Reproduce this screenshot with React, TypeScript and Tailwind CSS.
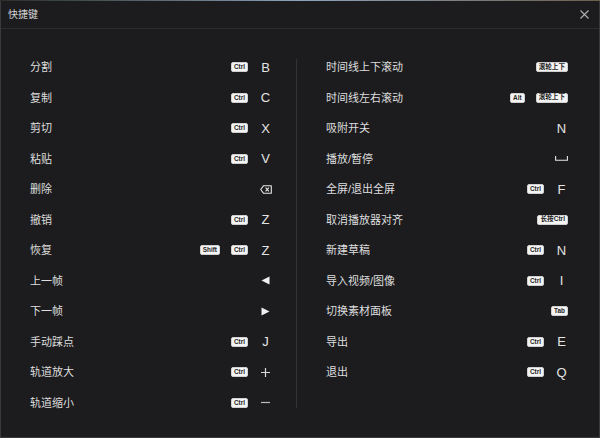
import React from 'react';

type Key =
  | { kind: 'badge'; text: string; cjk?: boolean }
  | { kind: 'char'; text: string }
  | { kind: 'icon'; name: 'backspace' | 'left' | 'right' | 'plus' | 'minus' | 'space' };

type Shortcut = { label: string; keys: Key[] };

const ctrl: Key = { kind: 'badge', text: 'Ctrl' };
const ch = (text: string): Key => ({ kind: 'char', text });

const leftList: Shortcut[] = [
  { label: '分割', keys: [ctrl, ch('B')] },
  { label: '复制', keys: [ctrl, ch('C')] },
  { label: '剪切', keys: [ctrl, ch('X')] },
  { label: '粘贴', keys: [ctrl, ch('V')] },
  { label: '删除', keys: [{ kind: 'icon', name: 'backspace' }] },
  { label: '撤销', keys: [ctrl, ch('Z')] },
  { label: '恢复', keys: [{ kind: 'badge', text: 'Shift' }, ctrl, ch('Z')] },
  { label: '上一帧', keys: [{ kind: 'icon', name: 'left' }] },
  { label: '下一帧', keys: [{ kind: 'icon', name: 'right' }] },
  { label: '手动踩点', keys: [ctrl, ch('J')] },
  { label: '轨道放大', keys: [ctrl, { kind: 'icon', name: 'plus' }] },
  { label: '轨道缩小', keys: [ctrl, { kind: 'icon', name: 'minus' }] },
];

const rightList: Shortcut[] = [
  { label: '时间线上下滚动', keys: [{ kind: 'badge', text: '滚轮上下', cjk: true }] },
  { label: '时间线左右滚动', keys: [{ kind: 'badge', text: 'Alt' }, { kind: 'badge', text: '滚轮上下', cjk: true }] },
  { label: '吸附开关', keys: [ch('N')] },
  { label: '播放/暂停', keys: [{ kind: 'icon', name: 'space' }] },
  { label: '全屏/退出全屏', keys: [ctrl, ch('F')] },
  { label: '取消播放器对齐', keys: [{ kind: 'badge', text: '长按Ctrl', cjk: true }] },
  { label: '新建草稿', keys: [ctrl, ch('N')] },
  { label: '导入视频/图像', keys: [ctrl, ch('I')] },
  { label: '切换素材面板', keys: [{ kind: 'badge', text: 'Tab' }] },
  { label: '导出', keys: [ctrl, ch('E')] },
  { label: '退出', keys: [ctrl, ch('Q')] },
];

function KeyIcon({ name }: { name: string }) {
  switch (name) {
    case 'backspace':
      return (
        <svg width="12" height="9" viewBox="0 0 12 9" fill="none" stroke="#e6e6e6" strokeWidth="1.1">
          <path d="M3.6 0.7 H11.3 V8.3 H3.6 L0.7 4.5 Z" strokeLinejoin="round" />
          <path d="M5.6 2.7 L8.9 6.3 M8.9 2.7 L5.6 6.3" />
        </svg>
      );
    case 'left':
      return (
        <svg width="9" height="9" viewBox="0 0 9 9">
          <path d="M0.5 4.5 L8.5 0.5 V8.5 Z" fill="#f0f0f0" />
        </svg>
      );
    case 'right':
      return (
        <svg width="9" height="9" viewBox="0 0 9 9">
          <path d="M8.5 4.5 L0.5 0.5 V8.5 Z" fill="#f0f0f0" />
        </svg>
      );
    case 'plus':
      return (
        <svg width="9" height="9" viewBox="0 0 9 9" stroke="#d8d8d8" strokeWidth="1.2">
          <path d="M4.5 0 V9 M0 4.5 H9" />
        </svg>
      );
    case 'minus':
      return (
        <svg width="9" height="9" viewBox="0 0 9 9" stroke="#bdbdbd" strokeWidth="1.2">
          <path d="M0 4.5 H9" />
        </svg>
      );
    default:
      return (
        <svg width="13" height="5" viewBox="0 0 13 5" fill="none" stroke="#e6e6e6" strokeWidth="1.1">
          <path d="M0.6 0 V4.3 H12.4 V0" />
        </svg>
      );
  }
}

function KeyView({ k }: { k: Key }) {
  if (k.kind === 'badge') {
    return (
      <span
        className={`inline-flex h-[10px] items-center rounded-[2px] border border-[#d0d0d0] bg-[#f4f4f4] px-[2px] font-bold leading-none text-[#1e1e1e] ${
          k.cjk ? 'text-[6.6px]' : 'text-[6.4px]'
        }`}
        style={{ fontFamily: '"Liberation Sans", "Noto Sans CJK SC", sans-serif' }}
      >
        {k.text}
      </span>
    );
  }
  if (k.kind === 'char') {
    return (
      <span className="inline-flex w-[13px] justify-center text-[13px] leading-none text-[#e4e4e4]">
        {k.text}
      </span>
    );
  }
  return (
    <span className="inline-flex w-[13px] items-center justify-center">
      <KeyIcon name={k.name} />
    </span>
  );
}

function Column({ items }: { items: Shortcut[] }) {
  return (
    <div className="flex w-[242px] flex-col">
      {items.map((s) => (
        <div key={s.label} className="flex h-[30.5px] items-center justify-between">
          <span className="text-[11px] text-[#dedede]">{s.label}</span>
          <div className="flex items-center gap-[11px]">
            {s.keys.map((k, i) => (
              <KeyView key={i} k={k} />
            ))}
          </div>
        </div>
      ))}
    </div>
  );
}

export default function App() {
  return (
    <div
      className="flex h-[438px] w-[600px] flex-col overflow-hidden bg-[#1c1c1e]"
      style={{ fontFamily: '"Liberation Sans", "Noto Sans CJK SC", sans-serif' }}
    >
      <div className="h-px w-full bg-linear-to-r from-[#2a2f28] via-[#8ea4bd] to-[#6b5f4d]" />
      <div className="flex flex-1 flex-col border-x border-b border-[#3a3a3c]">
        <div className="flex h-[28px] items-center justify-between border-b border-[#2e2e30] pl-[7px] pr-[10px]">
          <span className="text-[10px] text-[#d4d4d4]">快捷键</span>
          <svg width="9" height="9" viewBox="0 0 9 9" stroke="#b0b0b0" strokeWidth="1.1">
            <path d="M0.5 0.5 L8.5 8.5 M8.5 0.5 L0.5 8.5" />
          </svg>
        </div>
        <div className="flex pt-[23px]">
          <div className="ml-[29px]">
            <Column items={leftList} />
          </div>
          <div className="mb-[10px] ml-[24px] mt-[7px] w-px bg-[#333335]" />
          <div className="ml-[29px]">
            <Column items={rightList} />
          </div>
        </div>
      </div>
    </div>
  );
}
